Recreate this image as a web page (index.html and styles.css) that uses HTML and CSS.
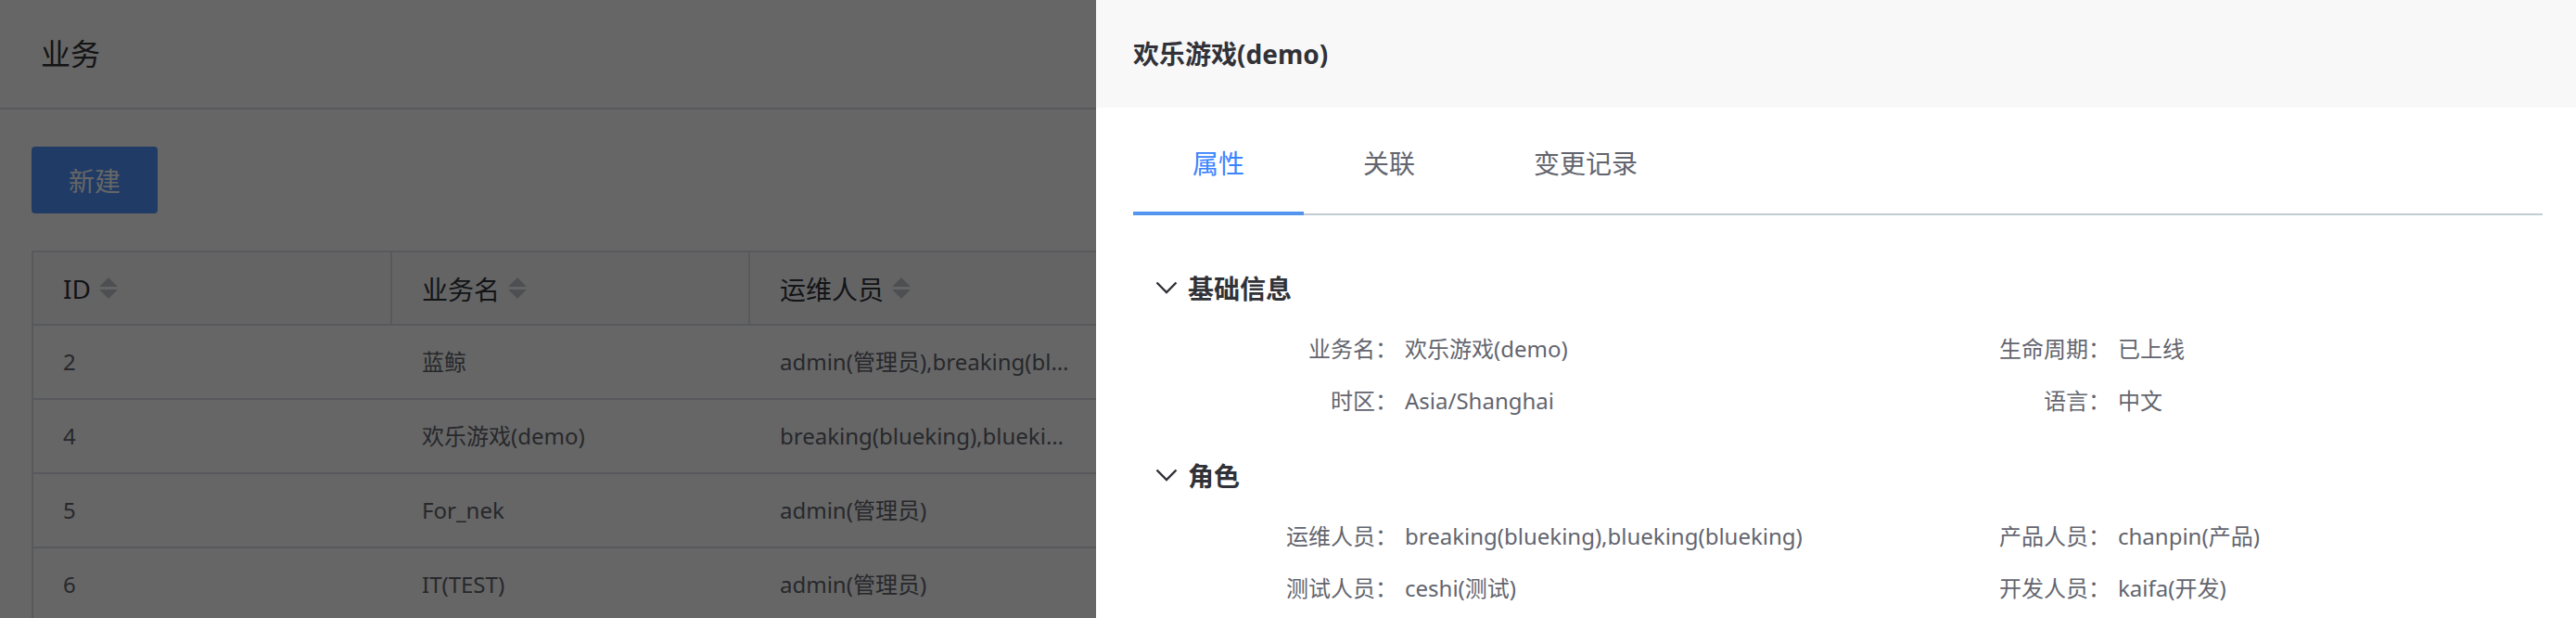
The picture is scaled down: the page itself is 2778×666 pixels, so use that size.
FILE: index.html
```html
<!DOCTYPE html>
<html lang="zh-CN">
<head>
<meta charset="utf-8">
<title>业务</title>
<link rel="stylesheet" href="styles.css">
</head>
<body>
  <div class="page">
    <header class="page-header">业务</header>
    <main class="page-body">
      <button class="btn-primary" type="button">新建</button>
      <div class="table">
        <div class="tr thead">
          <div class="cell">ID<span class="sort"><i class="up"></i><i class="down"></i></span></div>
          <div class="cell">业务名<span class="sort"><i class="up"></i><i class="down"></i></span></div>
          <div class="cell">运维人员<span class="sort"><i class="up"></i><i class="down"></i></span></div>
          <div class="cell filler"></div>
        </div>
        <div class="tr">
          <div class="cell">2</div>
          <div class="cell">蓝鲸</div>
          <div class="cell">admin(管理员),breaking(blueking),blueking(blueking)</div>
          <div class="cell filler"></div>
        </div>
        <div class="tr">
          <div class="cell">4</div>
          <div class="cell">欢乐游戏(demo)</div>
          <div class="cell">breaking(blueking),blueking(blueking)</div>
          <div class="cell filler"></div>
        </div>
        <div class="tr">
          <div class="cell">5</div>
          <div class="cell">For_nek</div>
          <div class="cell">admin(管理员)</div>
          <div class="cell filler"></div>
        </div>
        <div class="tr">
          <div class="cell">6</div>
          <div class="cell">IT(TEST)</div>
          <div class="cell">admin(管理员)</div>
          <div class="cell filler"></div>
        </div>
      </div>
    </main>
  </div>

  <div class="mask"></div>

  <aside class="drawer">
    <div class="drawer-header">欢乐游戏(demo)</div>
    <div class="drawer-content">
      <nav class="tabs">
        <div class="tab active">属性</div>
        <div class="tab">关联</div>
        <div class="tab">变更记录</div>
      </nav>

      <section class="group">
        <h3 class="group-title">
          <svg class="chevron" viewBox="0 0 24 14" width="24" height="14"><polyline points="1.5,1.5 12,12 22.5,1.5" fill="none" stroke="currentColor" stroke-width="2.4"/></svg>
          <span>基础信息</span>
        </h3>
        <ul class="props">
          <li class="prop"><span class="label">业务名：</span><span class="value">欢乐游戏(demo)</span></li>
          <li class="prop"><span class="label">生命周期：</span><span class="value">已上线</span></li>
          <li class="prop"><span class="label">时区：</span><span class="value">Asia/Shanghai</span></li>
          <li class="prop"><span class="label">语言：</span><span class="value">中文</span></li>
        </ul>
      </section>

      <section class="group">
        <h3 class="group-title">
          <svg class="chevron" viewBox="0 0 24 14" width="24" height="14"><polyline points="1.5,1.5 12,12 22.5,1.5" fill="none" stroke="currentColor" stroke-width="2.4"/></svg>
          <span>角色</span>
        </h3>
        <ul class="props">
          <li class="prop"><span class="label">运维人员：</span><span class="value">breaking(blueking),blueking(blueking)</span></li>
          <li class="prop"><span class="label">产品人员：</span><span class="value">chanpin(产品)</span></li>
          <li class="prop"><span class="label">测试人员：</span><span class="value">ceshi(测试)</span></li>
          <li class="prop"><span class="label">开发人员：</span><span class="value">kaifa(开发)</span></li>
        </ul>
      </section>
    </div>
  </aside>
</body>
</html>
```

FILE: styles.css
```css
* { box-sizing: border-box; }

html, body {
  margin: 0;
  padding: 0;
  height: 100%;
  overflow: hidden;
}

body {
  font-family: "Noto Sans", "Noto Sans CJK SC", sans-serif;
  color: #63656e;
  background: #ffffff;
}

/* ---------- page behind the mask ---------- */
.page-header {
  height: 118px;
  line-height: 116px;
  padding-left: 44px;
  font-size: 32px;
  color: #313238;
  border-bottom: 2px solid #dcdee5;
}

.page-body {
  padding: 40px 34px 0;
}

.btn-primary {
  display: block;
  width: 136px;
  height: 72px;
  margin: 0 0 40px;
  padding: 0;
  border: none;
  border-radius: 4px;
  background: #5294ff;
  color: #ffffff;
  font-family: inherit;
  font-size: 28px;
}

.table {
  border: 2px solid #dcdee5;
  border-bottom: none;
}

.tr {
  display: grid;
  grid-template-columns: 385px 386px 383px 1fr;
  height: 80px;
  border-bottom: 2px solid #dcdee5;
  font-size: 24px;
  color: #63656e;
  background: #ffffff;
}

.tr.thead {
  height: 79px;
  font-size: 28px;
  color: #313238;
  background: #fafbfd;
}

.cell {
  display: flex;
  align-items: center;
  padding: 0 32px 0 32px;
  border-left: 2px solid transparent;
  white-space: nowrap;
  overflow: hidden;
  min-width: 0;
}

.cell:first-child { border-left: none; }
.thead .cell + .cell { border-left-color: #dcdee5; }

.tr:not(.thead) .cell {
  display: block;
  line-height: 78px;
  text-overflow: ellipsis;
}

.sort {
  display: inline-flex;
  flex-direction: column;
  gap: 3px;
  margin-left: 9px;
}

.sort i {
  display: block;
  width: 0;
  height: 0;
  border-left: 10px solid transparent;
  border-right: 10px solid transparent;
}

.sort .up { border-bottom: 10px solid #c4c6cc; }
.sort .down { border-top: 10px solid #c4c6cc; }

/* ---------- mask ---------- */
.mask {
  position: fixed;
  inset: 0;
  background: rgba(0, 0, 0, 0.6);
}

/* ---------- drawer ---------- */
.drawer {
  position: fixed;
  top: 0;
  right: 0;
  bottom: 0;
  width: 1596px;
  background: #ffffff;
}

.drawer-header {
  height: 116px;
  line-height: 116px;
  padding-left: 40px;
  background: #f8f8f8;
  font-size: 28px;
  font-weight: 700;
  color: #313238;
}

.drawer-content {
  padding: 0 36px 0 40px;
}

.tabs {
  display: flex;
  padding-top: 8px;
  box-shadow: inset 0 -2px 0 #c3cbd3;
}

.tab {
  padding: 0 64px;
  line-height: 104px;
  font-size: 28px;
  color: #63656e;
  border-bottom: 4px solid transparent;
}

.tab.active {
  color: #3a84ff;
  border-bottom-color: #5394ef;
}

.group { margin-top: 32px; }
.tabs + .group { margin-top: 58px; }

.group-title {
  display: flex;
  align-items: center;
  margin: 0;
  height: 40px;
  padding-left: 24px;
  font-size: 28px;
  font-weight: 700;
  color: #313238;
}

.chevron {
  display: block;
  margin-right: 11px;
  color: #313238;
}

.props {
  display: grid;
  grid-template-columns: 769px 1fr;
  list-style: none;
  margin: 18px 0 0 45px;
  padding: 0;
}

.prop {
  display: flex;
  align-items: center;
  height: 56px;
  font-size: 24px;
  line-height: 32px;
  white-space: nowrap;
}

.label {
  width: 240px;
  text-align: right;
  color: #63656e;
}

.value {
  margin-left: 8px;
  color: #63656e;
}
```
